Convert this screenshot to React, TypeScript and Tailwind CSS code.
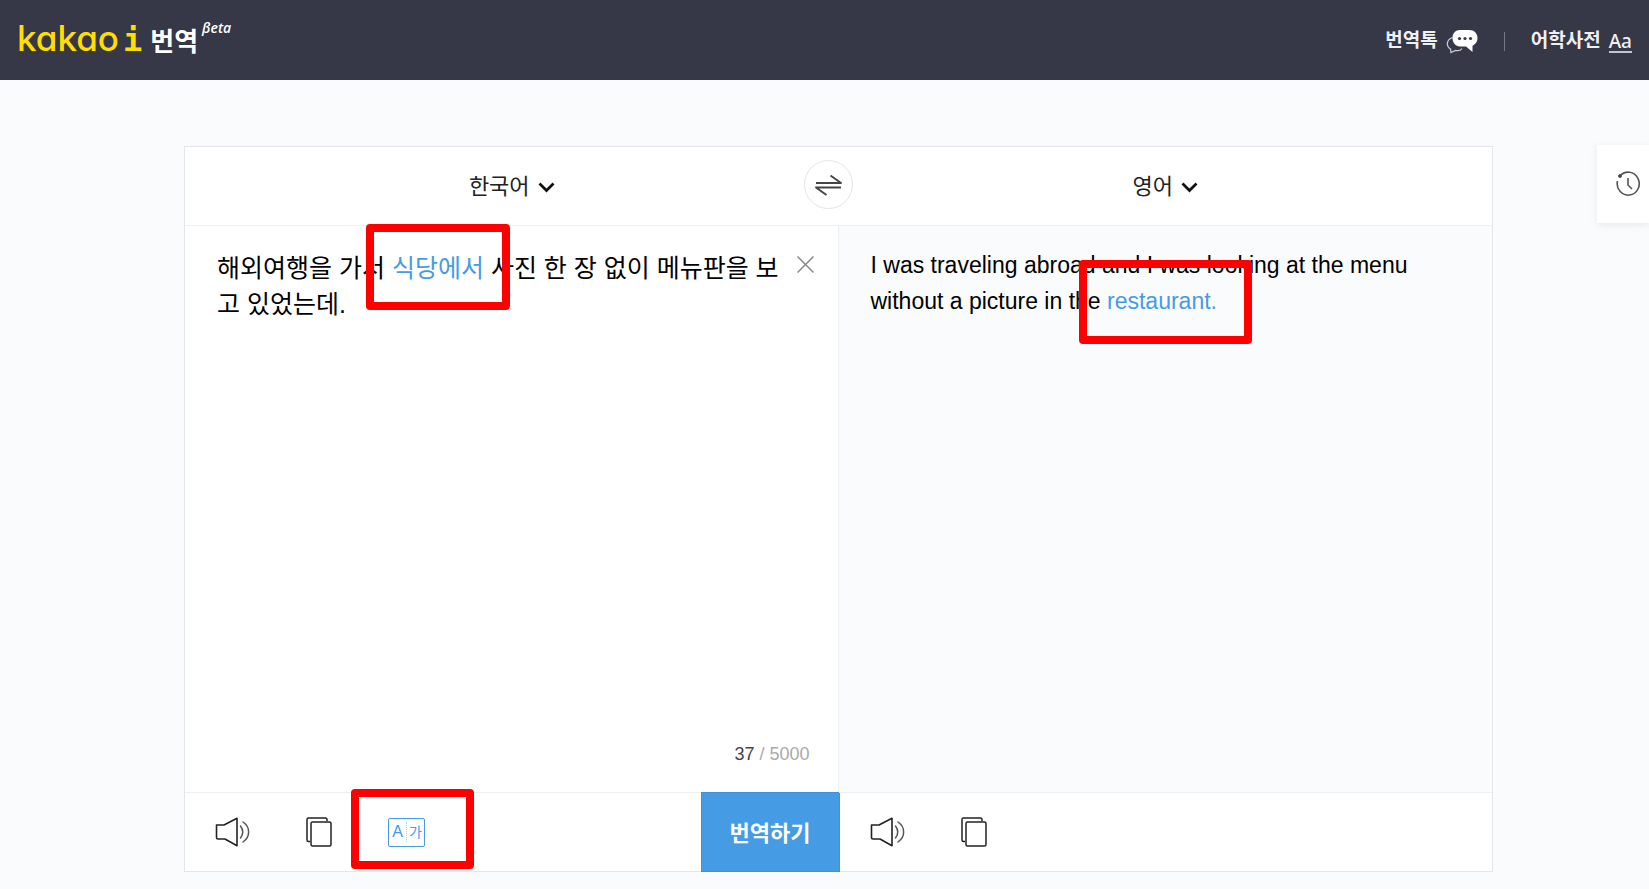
import type { ReactNode } from "react";

interface LanguageSelectProps {
  label: string;
  options: string[];
}

function LanguageSelect({ label, options }: LanguageSelectProps) {
  return (
    <label className="flex items-center gap-2 pt-0.5 text-[22px] leading-8 text-[#222]">
      <select
        aria-label={label}
        className="appearance-none bg-transparent [field-sizing:content] cursor-pointer outline-none"
      >
        {options.map((option) => (
          <option key={option}>{option}</option>
        ))}
      </select>
      <svg width="17" height="11" viewBox="0 0 17 11" fill="none">
        <path d="M1.5 1.5 8.5 8.5 15.5 1.5" stroke="#111" strokeWidth="2.8" />
      </svg>
    </label>
  );
}

// Red frame that points at the part of the screen being explained
function Marker({ className }: { className: string }) {
  return (
    <span
      aria-hidden="true"
      className={`absolute z-10 border-8 border-[#ff0000] rounded pointer-events-none ${className}`}
    />
  );
}

function SpeakerIcon() {
  return (
    <svg width="35" height="30" viewBox="0 0 35 30" fill="none" stroke="#222">
      <path
        d="M1.5 8H9L22 1.3V28.7L10 22H3Q1.5 22 1.5 20.5Z"
        strokeWidth="1.6"
        strokeLinejoin="round"
      />
      <path
        d="M25.5 9Q30 15 25.5 21M28 5C35.500 10 35.500 20 28 25"
        stroke="#555"
        strokeWidth="1.5"
        strokeLinecap="round"
      />
    </svg>
  );
}

function CopyIcon() {
  return (
    <svg width="26" height="30" viewBox="0 0 26 30" fill="none" stroke="#222">
      <path
        d="M4 24.5H2.5Q1 24.5 1 23V2.5Q1 1 2.5 1H19.5Q21 1 21 2.5V4"
        strokeWidth="1.5"
      />
      <rect x="5" y="5" width="20" height="24" rx="1.5" strokeWidth="1.5" />
    </svg>
  );
}

function TalkIcon() {
  return (
    <svg width="32" height="24" viewBox="0 0 32 24" fill="none">
      <path
        d="M6.5 7.5C0 10 0 16 4.5 19L5 22.5 9.5 20.5C12 21 15 20 16 18.5"
        stroke="#c9c9d1"
        strokeWidth="1.3"
      />
      <path
        d="M14 0H23.500C28 0 31.500 3.500 31.500 8C31.500 12 29 14.500 26.500 15.800V22L20 16.500H14C9.500 16.500 6.500 12.500 6.500 8C6.500 3.500 9.500 0 14 0Z"
        fill="#fff"
      />
      <circle cx="13.500" cy="8.500" r="1.600" fill="#363747" />
      <circle cx="19" cy="8.500" r="1.600" fill="#363747" />
      <circle cx="24.500" cy="8.500" r="1.600" fill="#363747" />
    </svg>
  );
}

function IconButton({ label, children }: { label: string; children: ReactNode }) {
  return (
    <button type="button" aria-label={label} className="cursor-pointer">
      {children}
    </button>
  );
}

function Header() {
  return (
    <header className="flex h-20 items-center justify-between bg-[#363747] px-[17px] text-white">
      <a href="#" className="flex items-baseline leading-10">
        <span className="font-['Inter',sans-serif] text-[35px] font-medium text-[#ffde00] [font-feature-settings:'cv11']">
          kakao
        </span>
        <span className="ml-1 font-['DejaVu_Sans_Mono',monospace] text-[32px] font-bold text-[#ffde00]">
          i
        </span>
        <span className="ml-2 text-[26px] font-bold">번역</span>
        <span className="ml-1 self-start font-['Open_Sans',sans-serif] text-sm leading-5 font-semibold italic">
          βeta
        </span>
      </a>
      <nav className="flex items-center pt-[3px] text-[19px] font-bold text-[#f0f0f2]">
        <a href="#" className="flex items-center gap-2">
          번역톡
          <TalkIcon />
        </a>
        <span className="mx-[26px] h-[19px] w-px bg-[#777783]" />
        <a href="#" className="flex items-center gap-2">
          어학사전
          <span className="border-b-2 border-[#c4c4cc] font-['Noto_Sans',sans-serif] text-[19px] leading-5 font-medium">
            Aa
          </span>
        </a>
      </nav>
    </header>
  );
}

export default function App() {
  return (
    <div className="min-h-screen overflow-hidden bg-[#fafbfd] font-['Liberation_Sans','Noto_Sans_CJK_KR',sans-serif] text-black">
      <Header />

      <main className="relative pt-[66px] pr-[156px] pb-4 pl-[184px]">
        <div className="grid grid-cols-2 border border-[#e5e6ec] bg-white">
          <div className="relative flex h-[79px] items-center justify-center border-b border-[#eeeff2]">
            <LanguageSelect label="출발 언어" options={["한국어"]} />
            <button
              type="button"
              aria-label="언어 바꾸기"
              className="absolute top-[13px] -right-[14px] flex size-[49px] items-center justify-center rounded-full border border-[#e3e4ea] bg-white cursor-pointer"
            >
              <svg width="27" height="22" viewBox="0 0 27 22" fill="none" stroke="#444">
                <path
                  d="M1 9H26L15.500 1.500M26 13.500H1L11.500 21"
                  strokeWidth="1.9"
                  strokeLinejoin="round"
                />
              </svg>
            </button>
          </div>
          <div className="flex h-[79px] items-center justify-center border-b border-[#eeeff2]">
            <LanguageSelect label="도착 언어" options={["영어"]} />
          </div>

          <section className="flex min-h-[566px] flex-col border-r border-[#eeeff2] pt-6 pr-6 pb-6 pl-8">
            <div className="flex flex-1 items-start justify-between">
              <p className="w-[574px] text-[25px] leading-9">
                해외여행을 가서{" "}
                <span className="relative text-[#459ce5]">
                  식당에서
                  <Marker className="-top-[30px] -left-[26px] h-[86px] w-36" />
                </span>{" "}
                사진 한 장 없이 메뉴판을 보고 있었는데.
              </p>
              <button type="button" aria-label="지우기" className="mt-1.5 cursor-pointer">
                <svg width="17" height="17" viewBox="0 0 17 17" stroke="#888" strokeWidth="1.5">
                  <path d="M.5.5 16.500 16.500M16.500.5.5 16.500" />
                </svg>
              </button>
            </div>
            <p className="pr-1 text-right text-lg text-[#aaa]">
              <span className="text-[#444]">37</span> / 5000
            </p>
          </section>
          <section className="min-h-[566px] bg-[#fafbfd] px-8 pt-[21px]">
            <p className="text-[23px] leading-9">
              I was traveling abroad and I was looking at the menu
              <br />
              without a picture in the{" "}
              <span className="relative text-[#459ce5]">
                restaurant.
                <Marker className="-top-7 -left-7 h-[84px] w-[173px]" />
              </span>
            </p>
          </section>

          <div className="flex h-[79px] items-center border-t border-[#eeeff2] pl-[30px]">
            <div className="flex items-center gap-14">
              <IconButton label="듣기">
                <SpeakerIcon />
              </IconButton>
              <IconButton label="복사">
                <CopyIcon />
              </IconButton>
              <button
                type="button"
                className="relative flex h-[29px] w-[37px] items-center rounded-xs border border-[#459ce5] text-[#459ce5] cursor-pointer"
              >
                <span className="flex-1 border-r border-dotted border-[#a5cff2] text-base leading-5">
                  A
                </span>
                <span className="flex-1 text-sm leading-5">가</span>
                <Marker className="-top-[30px] -left-[38px] h-20 w-[123px]" />
              </button>
            </div>
            <button
              type="button"
              className="-my-px -mr-px ml-auto h-[80px] w-[139px] border border-[#3f92d8] bg-[#459ce5] pt-0.5 text-[22px] font-bold text-white cursor-pointer"
            >
              번역하기
            </button>
          </div>
          <div className="flex h-[79px] items-center gap-14 border-t border-[#eeeff2] px-[31px]">
            <IconButton label="번역 듣기">
              <SpeakerIcon />
            </IconButton>
            <IconButton label="번역 복사">
              <CopyIcon />
            </IconButton>
          </div>
        </div>

        <button
          type="button"
          aria-label="번역 기록"
          className="absolute top-[65px] right-0 flex h-[78px] w-[52px] items-center justify-center bg-white pl-2.5 shadow-[0_2px_8px_rgba(0,0,0,0.08)] cursor-pointer"
        >
          <svg width="25" height="26" viewBox="0 0 25 26" fill="none" stroke="#555">
            <path d="M4 5A11 11.500 0 1 1 1.500 10M12 7V14L16 18" strokeWidth="1.600" />
            <circle cx="4" cy="5" r="1.500" fill="#444" />
          </svg>
        </button>
      </main>
    </div>
  );
}
